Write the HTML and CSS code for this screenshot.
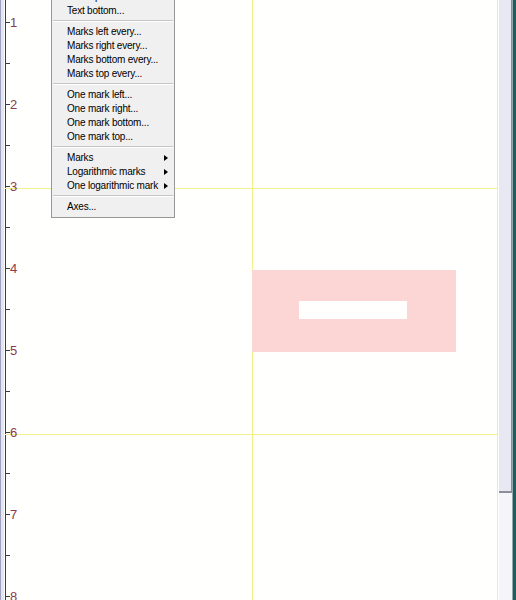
FILE: index.html
```html
<!DOCTYPE html>
<html lang="en">
<head>
  <meta charset="UTF-8" />
  <title>Axes</title>
  <link rel="stylesheet" href="styles.css">
</head>
<body>
  <div class="window">
    <div class="frame-left"></div>

    <!-- drawing area -->
    <div class="canvas">
      <div class="axis"></div>
      <div class="grid-h" style="top:188px"></div>
      <div class="grid-h" style="top:434px"></div>
      <div class="grid-v" style="left:248px"></div>
      <div class="grid-v" style="left:493px"></div>

      <div class="box">
        <div class="box-inner"></div>
      </div>

      <div class="ticks" id="ticks"></div>

      <!-- context menu -->
      <ul class="menu">
        <li class="item">Text top...</li>
        <li class="item">Text bottom...</li>
        <li class="sep"></li>
        <li class="item">Marks left every...</li>
        <li class="item">Marks right every...</li>
        <li class="item">Marks bottom every...</li>
        <li class="item">Marks top every...</li>
        <li class="sep"></li>
        <li class="item">One mark left...</li>
        <li class="item">One mark right...</li>
        <li class="item">One mark bottom...</li>
        <li class="item">One mark top...</li>
        <li class="sep"></li>
        <li class="item sub">Marks</li>
        <li class="item sub">Logarithmic marks</li>
        <li class="item sub">One logarithmic mark</li>
        <li class="sep"></li>
        <li class="item">Axes...</li>
      </ul>
    </div>

    <div class="scrollbar">
      <div class="thumb"></div>
    </div>
    <div class="frame-right"></div>
  </div>

  <script>
    // ruler ticks: 82px per unit, half marks between
    const ticks = document.getElementById('ticks');
    for (let i = 0; i <= 16; i++) {
      const y = -60 + i * 41;
      const t = document.createElement('div');
      t.className = 'tick';
      t.style.top = y + 'px';
      if (i % 2 === 0 && i > 0) {
        const lab = document.createElement('span');
        lab.className = 'label';
        lab.textContent = i / 2;
        t.appendChild(lab);
      }
      ticks.appendChild(t);
    }
  </script>
</body>
</html>
```

FILE: styles.css
```css
html, body {
  margin: 0;
  padding: 0;
  height: 100%;
  overflow: hidden;
}

body {
  font-family: 'Liberation Sans', Arial, sans-serif;
  background: #fffffe;
}

.window {
  display: flex;
  height: 600px;
  width: 516px;
}

.frame-left {
  width: 4px;
  background: #e4e5f0;
  border-left: 1px solid #9ea3c0;
  box-sizing: border-box;
}

.canvas {
  position: relative;
  flex: 1;
  background: #fffffe;
  overflow: hidden;
}

.axis {
  position: absolute;
  left: 1px;
  top: 0;
  bottom: 0;
  width: 1px;
  background: #3a3a48;
}

.grid-h {
  position: absolute;
  left: 1px;
  right: 0;
  height: 1px;
  background: #f1f08a;
}

.grid-v {
  position: absolute;
  top: 0;
  bottom: 0;
  width: 1px;
  background: #f1f08a;
}

.box {
  position: absolute;
  left: 248px;
  top: 270px;
  width: 204px;
  height: 82px;
  background: #fcd6d4;
}

.box-inner {
  position: absolute;
  left: 47px;
  top: 31px;
  width: 108px;
  height: 18px;
  background: #fffffe;
}

.tick {
  position: absolute;
  left: 1px;
  width: 5px;
  height: 1px;
  background: #3a3a48;
}

.label {
  position: absolute;
  left: 5px;
  top: -6px;
  font-size: 13px;
  line-height: 14px;
  color: #8a3a4c;
}

/* context menu */
.menu {
  position: absolute;
  left: 47px;
  top: -14px;
  width: 124px;
  margin: 0;
  padding: 3px 0 3px;
  list-style: none;
  background: #f0f0f0;
  border: 1px solid #979797;
  box-sizing: border-box;
  font-size: 10px;
  letter-spacing: -0.2px;
  color: #000;
}

.item {
  position: relative;
  height: 14px;
  line-height: 14px;
  padding-left: 15px;
  white-space: nowrap;
}

.item.sub::after {
  content: '';
  position: absolute;
  right: 6px;
  top: 4px;
  border-left: 4px solid #000;
  border-top: 3px solid transparent;
  border-bottom: 3px solid transparent;
}

.sep {
  height: 1px;
  margin: 2px 1px 3px;
  background: #c5c5c5;
  border-bottom: 1px solid #fff;
}

.scrollbar {
  width: 13px;
  background: #f5f5f9;
  border-left: 1px solid #fffffe;
  position: relative;
}

.thumb {
  height: 493px;
  background: #e8e8f2;
  border-right: 1px solid #8d8d99;
  border-bottom: 2px solid #8d8d99;
  box-sizing: border-box;
}

.frame-right {
  width: 3px;
  background: #1c5d5d;
  border-left: 1px solid #8fa9ac;
}
```
